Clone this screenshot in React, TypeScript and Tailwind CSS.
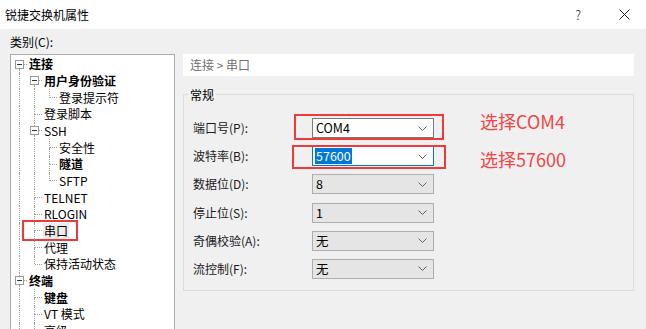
type TreeItem = {
  label: string
  depth: number
  box?: boolean
  bold?: boolean
  top: boolean
  bottom: boolean
  guides: number[]
  marked?: boolean
}

const tree: TreeItem[] = [
  { label: '连接', depth: 0, box: true, bold: true, top: false, bottom: true, guides: [] },
  { label: '用户身份验证', depth: 1, box: true, bold: true, top: false, bottom: true, guides: [0] },
  { label: '登录提示符', depth: 2, top: true, bottom: false, guides: [0, 1] },
  { label: '登录脚本', depth: 1, top: true, bottom: true, guides: [0] },
  { label: 'SSH', depth: 1, box: true, top: true, bottom: true, guides: [0] },
  { label: '安全性', depth: 2, top: true, bottom: true, guides: [0, 1] },
  { label: '隧道', depth: 2, bold: true, top: true, bottom: true, guides: [0, 1] },
  { label: 'SFTP', depth: 2, top: true, bottom: false, guides: [0, 1] },
  { label: 'TELNET', depth: 1, top: true, bottom: true, guides: [0] },
  { label: 'RLOGIN', depth: 1, top: true, bottom: true, guides: [0] },
  { label: '串口', depth: 1, top: true, bottom: true, guides: [0], marked: true },
  { label: '代理', depth: 1, top: true, bottom: true, guides: [0] },
  { label: '保持活动状态', depth: 1, top: true, bottom: false, guides: [0] },
  { label: '终端', depth: 0, box: true, bold: true, top: true, bottom: true, guides: [] },
  { label: '键盘', depth: 1, bold: true, top: true, bottom: true, guides: [0] },
  { label: 'VT 模式', depth: 1, top: true, bottom: true, guides: [0] },
  { label: '高级', depth: 1, top: true, bottom: true, guides: [0] },
]

const dot = 'border-l border-dotted border-[#a0a0a0]'

function TreeRow({ item }: { item: TreeItem }) {
  return (
    <div className="relative flex h-[16.67px] shrink-0">
      {Array.from({ length: item.depth }).map((_, i) => (
        <div key={i} className="flex w-[15px] shrink-0 justify-center">
          {item.guides.includes(i) && <div className={dot} />}
        </div>
      ))}
      {item.box ? (
        <div className="flex w-[15px] shrink-0">
          <div className="w-[3px]" />
          <div className="flex w-[9px] flex-col items-center">
            <div className={`flex-1 ${item.top ? dot : ''}`} />
            <div className="flex h-[9px] w-[9px] items-center justify-center border border-[#9a9a9a] bg-white">
              <div className="h-px w-[5px] bg-[#333]" />
            </div>
            <div className={`flex-1 ${item.bottom ? dot : ''}`} />
          </div>
          <div className="flex flex-1 items-center">
            <div className="w-full border-t border-dotted border-[#a0a0a0]" />
          </div>
        </div>
      ) : (
        <div className="flex w-[15px] shrink-0">
          <div className="w-[7px]" />
          <div className="flex w-px flex-col">
            <div className={`flex-1 ${item.top ? dot : ''}`} />
            <div className={`flex-1 ${item.bottom ? dot : ''}`} />
          </div>
          <div className="flex flex-1 items-center">
            <div className="w-full border-t border-dotted border-[#a0a0a0]" />
          </div>
        </div>
      )}
      <div
        className={`ml-[1px] flex items-center whitespace-nowrap px-px text-[12px] leading-[16px] text-black ${
          item.bold ? 'font-bold' : ''
        } ${item.marked ? 'bg-[#ececec]' : ''}`}
      >
        {item.label}
      </div>
      {item.marked && (
        <div className="absolute left-[10px] top-[-3px] h-[21px] w-[56px] border-2 border-[#ee3a3a]" />
      )}
    </div>
  )
}

function Chevron() {
  return (
    <svg width="9" height="5" viewBox="0 0 9 5" className="shrink-0">
      <polyline points="0.5,0.5 4.5,4.5 8.5,0.5" fill="none" stroke="#606060" strokeWidth="1" />
    </svg>
  )
}

type Field = {
  label: string
  value: string
  kind: 'white' | 'focus' | 'gray'
  note?: string
}

const fields: Field[] = [
  { label: '端口号(P):', value: 'COM4', kind: 'white', note: '选择COM4' },
  { label: '波特率(B):', value: '57600', kind: 'focus', note: '选择57600' },
  { label: '数据位(D):', value: '8', kind: 'gray' },
  { label: '停止位(S):', value: '1', kind: 'gray' },
  { label: '奇偶校验(A):', value: '无', kind: 'gray' },
  { label: '流控制(F):', value: '无', kind: 'gray' },
]

function FieldRow({ f }: { f: Field }) {
  const box =
    f.kind === 'white'
      ? 'bg-white border-[#7a7a7a]'
      : f.kind === 'focus'
        ? 'bg-white border-[#0078d7]'
        : 'bg-[#e5e5e5] border-[#adadad]'
  return (
    <div className="flex h-[20px] items-center">
      <div className="w-[119px] text-[12px] leading-[16px] text-[#1a1a1a]">{f.label}</div>
      <div className={`relative flex h-[20px] w-[122px] items-center justify-between border pl-[2px] pr-[6px] ${box}`}>
        {f.kind === 'focus' ? (
          <span className="bg-[#0078d7] px-px text-[12.5px] leading-[16px] text-white">{f.value}</span>
        ) : (
          <span className="px-px text-[12.5px] leading-[16px] text-black">{f.value}</span>
        )}
        <Chevron />
        {f.kind === 'white' && (
          <div className="absolute bottom-[-3px] left-[-19px] right-[-11px] top-[-5px] border-2 border-[#ee3a3a]" />
        )}
        {f.kind === 'focus' && (
          <div className="absolute bottom-[-4px] left-[-21px] right-[-13px] top-[-2px] border-2 border-[#ee3a3a]" />
        )}
      </div>
      {f.note && (
        <div
          className={`ml-[46px] whitespace-nowrap text-[18px] leading-[24px] text-[#f04646] ${
            f.kind === 'white' ? '-translate-y-[7px]' : 'translate-y-[3px]'
          }`}
        >
          {f.note}
        </div>
      )}
    </div>
  )
}

export default function App() {
  return (
    <div className="flex h-[329px] w-[646px] flex-col overflow-hidden bg-[#f0f0f0] font-['Noto_Sans_CJK_SC','Noto_Sans',sans-serif]">
      <div className="flex h-[29px] shrink-0 items-center bg-white pl-[5px]">
        <span className="text-[12px] leading-[16px] text-black">锐捷交换机属性</span>
        <span className="ml-auto text-[13px] font-light leading-[16px] text-[#333]">?</span>
        <svg width="11" height="11" viewBox="0 0 11 11" className="ml-[38px] mr-[16px]">
          <path d="M0.5 0.5 L10.5 10.5 M10.5 0.5 L0.5 10.5" stroke="#222" strokeWidth="1" />
        </svg>
      </div>
      <div className="flex h-[25px] shrink-0 items-center pl-[10px] text-[12px] leading-[16px] text-black">类别(C):</div>
      <div className="flex flex-1 gap-[8px] pl-[10px]">
        <div className="flex w-[165px] flex-col border border-[#adadad] bg-white pl-[1px] pt-[1px]">
          {tree.map((item) => (
            <TreeRow key={item.label} item={item} />
          ))}
        </div>
        <div className="flex w-[451px] flex-col">
          <div className="flex h-[22px] items-center bg-white pl-[7px] text-[12px] leading-[16px] text-[#707070]">
            连接 &gt; 串口
          </div>
          <div className="mt-[18px] flex h-[197px] flex-col border border-[#dcdcdc]">
            <div className="-mt-[9px] ml-[4px] h-[17px] w-fit bg-[#f0f0f0] px-[2px] text-[12px] leading-[17px] text-black">
              常规
            </div>
            <div className="mt-[15px] flex flex-col gap-[8.2px] pl-[9px]">
              {fields.map((f) => (
                <FieldRow key={f.label} f={f} />
              ))}
            </div>
          </div>
        </div>
      </div>
    </div>
  )
}
